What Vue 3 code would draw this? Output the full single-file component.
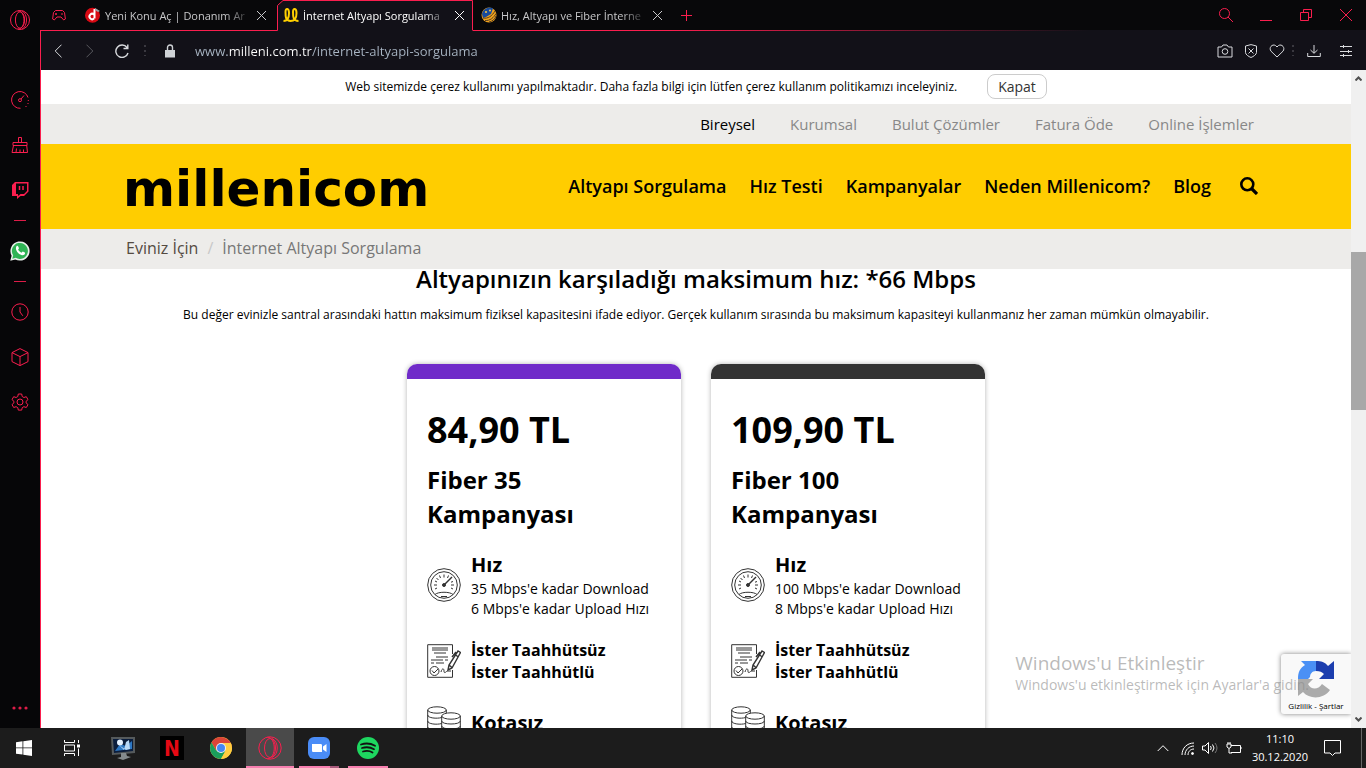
<template>
  <div class="desktop">
    <div class="browser">
      <aside class="sidebar">
        <button class="side-logo" aria-label="Opera">
          <svg width="22" height="22" viewBox="0 0 22 22" class="line">
            <circle cx="11" cy="11" r="9.5" />
            <ellipse cx="11" cy="11" rx="4.6" ry="8.2" />
            <path d="M9 1.8c8 .5 8 18 0 18.4M13 1.8c6 3 6 15.400 0 18.400" />
          </svg>
        </button>
        <button class="side-item" aria-label="Speed Dial">
          <svg width="18" height="18" viewBox="0 0 18 18" class="line">
            <path d="M17 6.500A8.400 8.400 0 1 0 9.500 17.300M10 8l3-3.500" />
            <circle cx="9" cy="9.200" r="1.500" />
            <path d="M17.300 9v1M17 12v1M15 15v1" />
          </svg>
        </button>
        <button class="side-item" aria-label="GX Cleaner">
          <svg width="18" height="18" viewBox="0 0 18 18" class="line">
            <path d="M7.500 6V1.500h3V6M2 6.500h14v3H2zM2.500 9.500L1 16.500h15.500l-.8-7M5 16.500l.5-4M9 16.500v-3M12.500 16.500v-3" />
          </svg>
        </button>
        <button class="side-item" aria-label="Twitch">
          <svg width="18" height="18" viewBox="0 0 18 18" class="line">
            <path d="M1 4l3-3h13.500v9.500L13 15H9.500L6 18v-3H1z" fill="#fa1e4e" stroke="none" />
            <path d="M5 2.500h11V10l-3 3H9.500L7 15v-2H5z" fill="#060608" stroke="none" />
            <path d="M8.500 5v4M12 5v4" stroke-width="1.500" />
          </svg>
        </button>
        <div class="side-sep"></div>
        <button class="side-item" aria-label="WhatsApp">
          <svg width="20" height="20" viewBox="0 0 20 20">
            <path d="M.3 19.700l1.300-5A9.600 9.600 0 1 1 5.300 18.400z" fill="#e8f0ea" />
            <path d="M2.300 17.700l.9-3.400a8 8 0 1 1 2.600 2.500z" fill="#2fb455" />
            <path d="M6.500 5.200c.5-.6 1.300-.6 1.600.1l.8 1.800c.1.500-.8 1.200-.8 1.500.5 1.300 1.900 2.600 3.300 3.100.5 0 1-1.200 1.500-1.100l1.900.9c.5.400.2 1.500-.3 2-3.200 3-10.700-4-8-8.300z" fill="#fff" />
          </svg>
        </button>
        <div class="side-sep"></div>
        <button class="side-item" aria-label="Geçmiş">
          <svg width="18" height="18" viewBox="0 0 18 18" class="line">
            <circle cx="9" cy="9" r="8.200" />
            <path d="M9 4v5l2.800 3.800" />
          </svg>
        </button>
        <button class="side-item" aria-label="Uzantılar">
          <svg width="18" height="18" viewBox="0 0 18 18" class="line">
            <path d="M9 .6l8 4v9l-8 4-8-4v-9zM1 4.600l8 4 8-4M9 8.600v9" />
          </svg>
        </button>
        <button class="side-item" aria-label="Ayarlar">
          <svg width="18" height="18" viewBox="0 0 18 18" class="line">
            <path d="M7.300 1h3.400l.5 2.500 1.700 1 2.400-.8L17 6.600l-1.900 1.700v1.600l1.900 1.700-1.700 2.900-2.400-.8-1.700 1-.5 2.400H7.300l-.5-2.400-1.700-1-2.400.8L1 11.600l1.900-1.700V8.300L1 6.600l1.700-2.900 2.400.8 1.700-1z" />
            <circle cx="9" cy="9" r="3" />
          </svg>
        </button>
        <button class="side-more" aria-label="Daha fazla">
          <svg width="16" height="4" viewBox="0 0 16 4" fill="#dd1c48">
            <circle cx="2" cy="2" r="1.600" /><circle cx="8" cy="2" r="1.600" /><circle cx="14" cy="2" r="1.600" />
          </svg>
        </button>
      </aside>

      <div class="window">
        <header class="tabbar">
          <button class="gx" aria-label="GX Corner">
            <svg width="14" height="12" viewBox="0 0 14 12" class="line">
              <path d="M3.500 1.500h7l2 2 .9 6.500-1.700 1L9 8H5l-2.700 3L.6 10l.9-6.500z" />
              <path d="M4 4v2M3 5h2M9 5h2" />
            </svg>
          </button>
          <div v-for="tab in tabs" :key="tab.title" class="tab" :class="{ active: tab.active }">
            <svg v-if="tab.active" class="tab-shape" viewBox="0 0 198 31" preserveAspectRatio="none">
              <path d="M0 30.500H2.500V5.500L8 .5H197.500V31H0z" fill="#121118" />
              <path d="M0 30.500H2.500V5.500L8 .5H197.500V30.500" class="line" />
            </svg>
            <svg v-if="tab.icon === 'dh'" class="favicon" viewBox="0 0 16 16">
              <circle cx="7.500" cy="8.200" r="7.500" fill="#d80a14" />
              <path d="M9 11.500a2.700 2.700 0 1 1 0-4M9.500 2v9.500" fill="none" stroke="#fff" stroke-width="2" />
              <path d="M10 1l5 3-2 1-3-2z" fill="#9aa3a8" />
            </svg>
            <svg v-else-if="tab.icon === 'milleni'" class="favicon" viewBox="0 0 16 16">
              <path d="M.5 14c4 0 5.500-3 5.500-8S2.500.5 2.500 5s0 9 5 9S13.500 11 13.500 6s-3.500-5.500-3.500-1 0 9 5.500 9" fill="none" stroke="#ffd000" stroke-width="2" />
            </svg>
            <svg v-else class="favicon" viewBox="0 0 16 16">
              <circle cx="8" cy="8" r="7.500" fill="#f0a31c" />
              <path d="M1 7A7.500 7.500 0 0 1 12 1.500L10 7 5 10 2 11z" fill="#174a9c" />
              <path d="M2 11c5 1 9-2 12-7M4 13.500c5 .5 9-3 11-7M8 15c4-1 6-3 7-6" fill="none" stroke="#553b20" />
              <circle cx="5" cy="5" r="1" fill="#ffca42" /><circle cx="9" cy="3.500" r="1" fill="#ffca42" />
            </svg>
            <span class="tab-title">{{ tab.title }}</span>
            <button class="tab-close" aria-label="Sekmeyi kapat">
              <svg width="11" height="11" viewBox="0 0 11 11"><path d="M1 1l9 9M10 1l-9 9" /></svg>
            </button>
          </div>
          <div class="tabbar-rest">
            <button class="new-tab" aria-label="Yeni sekme">
              <svg width="11" height="11" viewBox="0 0 11 11" class="line"><path d="M5.500 0v11M0 5.500h11" /></svg>
            </button>
            <div class="window-buttons">
              <button aria-label="Sekmelerde ara">
                <svg width="16" height="16" viewBox="0 0 16 16" class="line"><circle cx="6.500" cy="6.500" r="5" /><path d="M10 10l5 5" /></svg>
              </button>
              <button aria-label="Simge durumuna küçült">
                <svg width="12" height="12" viewBox="0 0 12 12" class="line"><path d="M0 11.500h12" /></svg>
              </button>
              <button aria-label="Önceki boyut">
                <svg width="12" height="12" viewBox="0 0 12 12" class="line"><path d="M.5 3.500h8v8h-8zM3.500 3.500v-3h8v8h-3" /></svg>
              </button>
              <button aria-label="Kapat">
                <svg width="12" height="12" viewBox="0 0 12 12" class="line"><path d="M0 0l12 12M12 0L0 12" /></svg>
              </button>
            </div>
          </div>
        </header>

        <div class="addressbar">
          <button class="nav-btn" aria-label="Geri">
            <svg width="8" height="14" viewBox="0 0 8 14"><path d="M7.500 .7L1.200 7l6.300 6.300" /></svg>
          </button>
          <button class="nav-btn dim" aria-label="İleri">
            <svg width="8" height="14" viewBox="0 0 8 14"><path d="M.5 .7L6.800 7 .5 13.300" /></svg>
          </button>
          <button class="nav-btn" aria-label="Yenile">
            <svg width="14" height="14" viewBox="0 0 14 14"><path d="M12 3.500A6.200 6.200 0 1 0 13 9M12.800 .5v4H8.500" stroke-width="1.400" /></svg>
          </button>
          <span class="dots"></span>
          <svg class="lock" width="10" height="14" viewBox="0 0 10 14">
            <path d="M0 6h10v7.500H0z" fill="#cfd3d6" />
            <path d="M2.500 6V3.500a2.500 2.500 0 0 1 5 0V6" fill="none" stroke="#cfd3d6" stroke-width="1.400" />
          </svg>
          <input v-model="url" class="url" type="text" aria-label="Adres" spellcheck="false" />
          <div class="tools">
            <button aria-label="Anlık görüntü">
              <svg width="16" height="14" viewBox="0 0 16 14"><path d="M1 3h3.500L6 1h4l1.500 2H15v10H1z" /><circle cx="8" cy="7.500" r="2.800" /></svg>
            </button>
            <button aria-label="Reklam engelleyici">
              <svg width="14" height="14" viewBox="0 0 14 14"><path d="M7 .6l5.500 1.400v6.500c0 2-3 4-5.500 5-2.500-1-5.500-3-5.500-5V2zM4.500 4.500l5 5M9.500 4.500l-5 5" /></svg>
            </button>
            <button aria-label="Yer imi ekle">
              <svg width="16" height="14" viewBox="0 0 16 14"><path d="M8 13L2 7.200C-.5 4 3-.5 6.500 1.500L8 3l1.500-1.500C13-.5 16.500 4 14 7.200z" /></svg>
            </button>
            <span class="dots"></span>
            <button class="download" aria-label="İndirmeler">
              <svg width="14" height="14" viewBox="0 0 14 14"><path d="M7 1v8M3.500 6L7 9.300 10.500 6M.7 9v3.500h12.600V9" /></svg>
            </button>
            <button class="easy" aria-label="Kolay kurulum">
              <svg width="12" height="12" viewBox="0 0 12 12"><path d="M0 1.500h12M0 6.500h12M0 10.500h12M3.500 0v3M8.500 5v3M3.500 9v3" /></svg>
            </button>
          </div>
        </div>

        <div class="viewport">
          <main class="page">
            <div class="cookie">
              <p>Web sitemizde çerez kullanımı yapılmaktadır. Daha fazla bilgi için lütfen çerez kullanım politikamızı inceleyiniz.</p>
              <button>Kapat</button>
            </div>

            <nav class="topnav">
              <div class="container">
                <a v-for="(item, i) in topLinks" :key="item" href="#" :class="{ current: i === 0 }">{{ item }}</a>
              </div>
            </nav>

            <nav class="mainnav">
              <div class="container">
                <a href="#" class="logo" aria-label="millenicom">
                  <svg width="306" height="56" viewBox="0 0 306 56">
                    <text x="-3" y="48">millenicom</text>
                  </svg>
                </a>
                <div class="menu">
                  <a v-for="item in menu" :key="item" href="#">{{ item }}</a>
                  <button aria-label="Ara">
                    <svg width="18" height="18" viewBox="0 0 18 18" fill="none" stroke="#000">
                      <circle cx="7.300" cy="7.300" r="6" stroke-width="2.600" />
                      <path d="M11.500 11.500l5.500 5.500" stroke-width="3.200" />
                    </svg>
                  </button>
                </div>
              </div>
            </nav>

            <nav class="breadcrumb">
              <div class="container">
                <a href="#">Eviniz İçin</a>
                <span class="slash">/</span>
                <span>İnternet Altyapı Sorgulama</span>
              </div>
            </nav>

            <section class="result">
              <h1>Altyapınızın karşıladığı maksimum hız: *66 Mbps</h1>
              <p>Bu değer evinizle santral arasındaki hattın maksimum fiziksel kapasitesini ifade ediyor. Gerçek kullanım sırasında bu maksimum kapasiteyi kullanmanız her zaman mümkün olmayabilir.</p>

              <div class="cards">
                <article v-for="plan in plans" :key="plan.name" class="card" :class="plan.theme">
                  <div class="price">{{ plan.price }}</div>
                  <h2>{{ plan.name }}<br />Kampanyası</h2>

                  <div class="feature">
                    <svg width="34" height="34" viewBox="0 0 34 34" class="outline">
                      <circle cx="17" cy="17" r="16.300" />
                      <circle cx="17" cy="17" r="13.300" />
                      <path d="M8 26.500c3-3 15-3 18 0M14 28.500h6" />
                      <path d="M7 17h3M27 17h-3M17 6.500v3M9.500 10l2 2M8 13l2 1M12.500 7.500l1 2.500M21.500 7.500l-1 2.500M26 13.500l-2 .7M8 21l2-1M26 21l-2-1" />
                      <path d="M18 16l7-7" stroke-width="1.500" />
                      <circle cx="17" cy="17" r="1.500" fill="#333" />
                    </svg>
                    <div>
                      <h3>Hız</h3>
                      <p>{{ plan.down }} Mbps'e kadar Download</p>
                      <p>{{ plan.up }} Mbps'e kadar Upload Hızı</p>
                    </div>
                  </div>

                  <div class="feature">
                    <svg width="34" height="34" viewBox="0 0 34 34" class="outline">
                      <path d="M25.500 10V.7H.7v32.600h24.800V26" />
                      <path d="M5 4h16M5 6h16M7 9h12M9 13h12M4 16h12M18 16h3M4 19h3M9 19h8M14 28c1-4 3-4 3-1 0 3 2 1 3 0h4" />
                      <circle cx="7.500" cy="27" r="4.500" />
                      <path d="M5 26.500l2 2.500 4-4" />
                      <path d="M21 26l1-5L31 7l2.500 1.500L25 24zM22 21l3 2.500M28.500 11l3 2M25 13l4-5" stroke-width="1.400" />
                    </svg>
                    <div>
                      <h4>İster Taahhütsüz</h4>
                      <h4>İster Taahhütlü</h4>
                    </div>
                  </div>

                  <div class="feature quota">
                    <svg width="34" height="34" viewBox="0 0 34 34" class="outline">
                      <ellipse cx="10" cy="4" rx="9.300" ry="3.200" />
                      <path d="M.7 4v25c0 4 13 4 14 2M19.300 4v3M.7 9c0 3 9 4 14 2.500M.7 15c0 3 9 4 14 2.500M.7 21c0 3 9 4 14 2.500" />
                      <ellipse cx="24" cy="10" rx="9.300" ry="3.200" />
                      <path d="M14.700 10v20c0 4 18.600 4 18.600 0V10M14.700 15c0 4 18.600 4 18.600 0M14.700 20c0 4 18.600 4 18.600 0M14.700 25c0 4 18.600 4 18.600 0" />
                    </svg>
                    <h3>Kotasız</h3>
                  </div>
                </article>
              </div>
            </section>

            <div class="recaptcha">
              <svg width="38" height="38" viewBox="0 0 38 38">
                <path d="M4 1h15v10c-4 0-6 3-6 6l-3 3-9-1C1 12 3 8 8 5z" fill="#4a90f5" />
                <path d="M19 1c5 0 9 1 12 5l6-5v18H22l5-5c-2-2-4-3-8-3z" fill="#1c3eae" />
                <path d="M1 19h15l-5 5c3 6 10 6 14 0l8 6c-6 9-20 10-27 2l-5 4z" fill="#ababab" />
              </svg>
              <div><a href="#">Gizlilik</a> - <a href="#">Şartlar</a></div>
            </div>
            <div class="activate">
              <strong>Windows'u Etkinleştir</strong>
              <span>Windows'u etkinleştirmek için Ayarlar'a gidin.</span>
            </div>
          </main>

          <div class="scrollbar">
            <button aria-label="Yukarı kaydır">
              <svg width="7" height="5" viewBox="0 0 7 5"><path d="M.5 4.500l3-3 3 3" /></svg>
            </button>
            <div class="track">
              <div class="thumb" :style="{ top: scroll.top + '%', height: scroll.size + '%' }"></div>
            </div>
            <button aria-label="Aşağı kaydır">
              <svg width="7" height="5" viewBox="0 0 7 5"><path d="M.5 .5l3 3 3-3" /></svg>
            </button>
          </div>
        </div>
      </div>
    </div>

    <footer class="taskbar">
      <button class="system" aria-label="Başlat">
        <svg width="16" height="16" viewBox="0 0 16 16" fill="#fff"><path d="M0 2.200l6.500-.9v6.200H0zM7.300 1.200L16 0v7.500H7.300zM0 8.300h6.500v6.200L0 13.700zM7.300 8.300H16V16l-8.700-1.200z" /></svg>
      </button>
      <button class="system" aria-label="Görev görünümü">
        <svg width="16" height="16" viewBox="0 0 16 16" fill="none" stroke="#fff">
          <path d="M.5 0v2.500h10V0M.5 16v-2.500h10V16M.5 5h10v6H.5zM14.500 0v3M14.500 8.500V16" />
          <path d="M13 4.500h3v3h-3z" fill="#fff" stroke="none" />
        </svg>
      </button>
      <button class="app" aria-label="Bilgisayar">
        <svg width="24" height="24" viewBox="0 0 24 24">
          <path d="M0 1h24v16L1 19z" fill="#555a5c" />
          <path d="M2 3h20v12L3 17z" fill="#0b1e3d" />
          <path d="M4 15l5-7 6 2 6-5v8z" fill="#2d78c4" />
          <circle cx="9" cy="6.500" r="3" fill="#e6f2ff" /><path d="M8 9l5 5 2-8 3-2 1 9-4 1z" fill="#b8d9f7" />
          <path d="M10 17h5l1 3 4 1-8 3-6-2 4-1z" fill="#838a8d" />
        </svg>
      </button>
      <button class="app" aria-label="Netflix">
        <svg width="24" height="24" viewBox="0 0 24 24">
          <rect width="24" height="24" fill="#000" />
          <text x="12" y="20" class="netflix" text-anchor="middle">N</text>
        </svg>
      </button>
      <button class="app" aria-label="Google Chrome">
        <svg width="22" height="22" viewBox="0 0 22 22">
          <circle cx="11" cy="11" r="11" fill="#ffcd40" />
          <path d="M11 11H22A11 11 0 0 0 1.500 5.500L6.300 13.700z" fill="#dc4437" />
          <path d="M1.500 5.500A11 11 0 0 0 11 22l4.500-8L11 11 6.300 13.700z" fill="#1a9f5b" />
          <path d="M11 6h9.800A11 11 0 0 1 11 22l4.700-8.500z" fill="#ffcd40" />
          <circle cx="11" cy="11" r="5" fill="#f1f1f1" /><circle cx="11" cy="11" r="4" fill="#4587f3" />
        </svg>
      </button>
      <button class="app focused" aria-label="Opera GX">
        <svg width="24" height="24" viewBox="0 0 24 24" class="line">
          <circle cx="12" cy="12" r="11.200" />
          <ellipse cx="12" cy="12" rx="5.500" ry="9.500" />
          <path d="M9.500 1c9 1 9 21 0 22M14 2.500c7 3 7 16 0 19" />
        </svg>
      </button>
      <button class="app grouped" aria-label="Zoom">
        <svg width="22" height="22" viewBox="0 0 22 22">
          <rect width="22" height="22" rx="6" fill="#4a8cf7" />
          <path d="M4 7h8.500c1 0 1.500.5 1.500 1.500V15H5.500C4.500 15 4 14.500 4 13.500zM15 9.500l3.500-2.500v8L15 12.500z" fill="#fff" />
        </svg>
      </button>
      <button class="app open" aria-label="Spotify">
        <svg width="22" height="22" viewBox="0 0 22 22">
          <circle cx="11" cy="11" r="11" fill="#1ed760" />
          <path d="M4 7.500c4.500-1.500 10-1 14 1.200M5 11c4-1.200 8.500-.8 12 1.200M6 14.500c3.500-1 7-.6 9.500 1" fill="none" stroke="#121212" stroke-width="1.800" stroke-linecap="round" />
        </svg>
      </button>

      <div class="tray">
        <button class="caret" aria-label="Gizli simgeleri göster">
          <svg width="12" height="8" viewBox="0 0 12 8"><path d="M.7 7L6 1.700 11.300 7" /></svg>
        </button>
        <svg width="13" height="13" viewBox="0 0 13 13">
          <path d="M1 13C1 6 6 1 13 1M4 13c0-5 4-9 9-9M7 13c0-3.500 2.500-6 6-6" />
          <circle cx="11.500" cy="11.500" r="1" fill="#fff" />
        </svg>
        <svg width="16" height="14" viewBox="0 0 16 14">
          <path d="M.5 5h2.500L6.500 1.500v11L3 9H.5zM8.500 5q1.500 2 0 4M10.500 3.500q3 3.500 0 7" />
          <path d="M13 2q4 5 0 10" stroke="#777" />
        </svg>
        <svg width="16" height="12" viewBox="0 0 16 12">
          <path d="M5 3.500h9.500v7H5M14.500 6H16M1 2h4v3L3 6.500 1 5zM2 0v2M4 0v2M3 6.500V11h3" />
        </svg>
        <div class="clock"><span>11:10</span><span>30.12.2020</span></div>
        <button class="notify" aria-label="Bildirimler">
          <svg width="17" height="16" viewBox="0 0 17 16"><path d="M.5 .5h16v12.500H11L8.500 15.500 6 13H.5z" /></svg>
        </button>
        <div class="show-desktop"></div>
      </div>
    </footer>
  </div>
</template>

<script setup>
import { ref } from 'vue'

const url = ref('www.milleni.com.tr/internet-altyapi-sorgulama')

const tabs = [
  { title: 'Yeni Konu Aç | Donanım Ar', icon: 'dh', active: false },
  { title: 'İnternet Altyapı Sorgulama', icon: 'milleni', active: true },
  { title: 'Hız, Altyapı ve Fiber İnterne', icon: 'globe', active: false }
]

const topLinks = ['Bireysel', 'Kurumsal', 'Bulut Çözümler', 'Fatura Öde', 'Online İşlemler']
const menu = ['Altyapı Sorgulama', 'Hız Testi', 'Kampanyalar', 'Neden Millenicom?', 'Blog']

const plans = [
  { name: 'Fiber 35', price: '84,90 TL', down: 35, up: 6, theme: 'purple' },
  { name: 'Fiber 100', price: '109,90 TL', down: 100, up: 8, theme: 'dark' }
]

const scroll = { top: 26.4, size: 25.3 }
</script>

<style>
body {
  margin: 0;
  overflow: hidden;
}
</style>

<style scoped>
* {
  box-sizing: border-box;
}

.desktop {
  display: flex;
  flex-direction: column;
  height: 100vh;
  font-family: 'Open Sans', 'Noto Sans', sans-serif;
  color: #000;
}

button {
  display: flex;
  align-items: center;
  justify-content: center;
  padding: 0;
  border: 0;
  background: none;
  color: inherit;
  font-family: inherit;
}

a {
  color: inherit;
  text-decoration: none;
}

h1, h2, h3, h4, p {
  margin: 0;
}

svg {
  flex-shrink: 0;
}

.line {
  fill: none;
  stroke: #fa1e4e;
}

.browser {
  display: flex;
  flex: 1;
  min-height: 0;
  background: #060608;
}

/* sidebar */
.sidebar {
  display: flex;
  flex-direction: column;
  width: 40px;
}

.side-logo {
  height: 40px;
  margin-bottom: 37px;
}

.side-item {
  height: 45px;
}

.side-sep {
  align-self: center;
  width: 12px;
  height: 1px;
  margin: 8px 0 7px;
  background: #dd1c48;
}

.side-more {
  height: 40px;
  margin-top: auto;
}

.window {
  display: flex;
  flex: 1;
  flex-direction: column;
  min-width: 0;
}

/* tabs */
.tabbar {
  display: flex;
  height: 31px;
  background: #08080a;
}

.gx {
  width: 37px;
  border-bottom: 1px solid #fa1e4e;
}

.tab {
  position: relative;
  display: flex;
  align-items: center;
  width: 198px;
  padding: 0 7px 0 8px;
  border-bottom: 1px solid #fa1e4e;
  color: #c8c8ca;
}

.tab.active {
  border-bottom: 0;
  padding-bottom: 1px;
  color: #fff;
}

.tab-shape {
  position: absolute;
  inset: 0;
  width: 100%;
  height: 100%;
}

.favicon {
  position: relative;
  width: 16px;
  height: 16px;
}

.tab-title {
  position: relative;
  flex: 1;
  margin-left: 4px;
  overflow: hidden;
  font-size: 11px;
  white-space: nowrap;
  mask-image: linear-gradient(to right, #000 80%, transparent 98%);
}

.tab-close {
  position: relative;
  width: 13px;
  height: 20px;
}

.tab-close svg {
  fill: none;
  stroke: currentColor;
}

.tabbar-rest {
  display: flex;
  flex: 1;
  justify-content: space-between;
  border-bottom: 1px solid;
  border-image: linear-gradient(to right, #fa1e4e, #121118 60%) 1;
}

.new-tab {
  width: 30px;
}

.window-buttons {
  display: flex;
}

.window-buttons button {
  width: 40px;
}

/* address bar */
.addressbar {
  display: flex;
  align-items: center;
  height: 39px;
  padding-left: 1px;
  border-left: 1px solid #fa1e4e;
  background: #121118;
}

.addressbar svg:not(.lock) {
  fill: none;
  stroke: #d8dadd;
}

.nav-btn {
  width: 32px;
  height: 32px;
}

.nav-btn.dim svg {
  opacity: 0.35;
}

.dots {
  width: 2px;
  height: 11px;
  margin: 0 6px;
  background: repeating-linear-gradient(#3a3940 0 2px, transparent 2px 5px);
}

.lock {
  margin-left: 13px;
}

.url {
  flex: 1;
  min-width: 0;
  margin-left: 20px;
  padding: 0;
  border: 0;
  outline: 0;
  background: linear-gradient(to right, #a9b6c4 33px, #fff 33px 117px, #a9b6c4 117px);
  background-clip: text;
  color: transparent;
  font-family: inherit;
  font-size: 13px;
}

.tools {
  display: flex;
  align-items: center;
  padding-right: 8px;
}

.tools button {
  width: 26px;
  height: 26px;
}

.tools .dots {
  margin-left: 2px;
}

.tools .download {
  width: 28px;
}

.tools .easy {
  width: 24px;
  margin-left: 6px;
}

/* page */
.viewport {
  display: flex;
  flex: 1;
  min-height: 0;
  border-left: 1px solid #fa1e4e;
}

.page {
  position: relative;
  flex: 1;
  min-width: 0;
  overflow: hidden;
  background: #fff;
}

.container {
  display: flex;
  align-items: center;
  max-width: 1140px;
  height: 100%;
  margin: 0 auto;
}

.cookie {
  display: flex;
  align-items: center;
  justify-content: center;
  gap: 30px;
  height: 34px;
  padding-bottom: 1px;
  font-size: 12px;
}

.cookie button {
  padding: 0 10px;
  border: 1px solid #ccc;
  border-radius: 8px;
  background: #fff;
  color: #333;
  font-size: 14px;
  line-height: 23px;
}

.topnav {
  height: 40px;
  background: #edecea;
}

.topnav .container {
  justify-content: flex-end;
  gap: 35px;
  padding-right: 12px;
  color: #888;
  font-size: 15px;
}

.topnav .current {
  color: #000;
}

.mainnav {
  height: 85px;
  background: #ffcd00;
}

.mainnav .container {
  justify-content: space-between;
  padding: 0 8px 2px 0;
}

.logo svg {
  display: block;
}

.logo text {
  font-family: 'DejaVu Sans', sans-serif;
  font-size: 50px;
  font-weight: bold;
}

.menu {
  display: flex;
  align-items: center;
  gap: 23px;
  font-size: 18px;
  font-weight: 600;
}

.menu button {
  margin-left: 6px;
}

.breadcrumb {
  height: 40px;
  padding-bottom: 2px;
  background: #edecea;
  color: #777;
  font-size: 16px;
}

.breadcrumb a {
  color: #544a41;
}

.slash {
  margin: 0 9px;
  color: #c8c8c8;
}

.result {
  text-align: center;
}

.result h1 {
  font-size: 24px;
  font-weight: 600;
  line-height: 20px;
}

.result > p {
  margin-top: 16px;
  font-size: 12px;
  line-height: 20px;
}

.cards {
  display: flex;
  justify-content: center;
  gap: 30px;
  margin-top: 39px;
  text-align: left;
}

.card {
  width: 274px;
  padding: 24px 20px 40px;
  border-top: 15px solid;
  border-radius: 10px;
  box-shadow: 0 0 5px rgba(0, 0, 0, 0.3);
}

.card.purple {
  border-top-color: #702bc9;
}

.card.dark {
  border-top-color: #333;
}

.price {
  font-size: 36px;
  font-weight: 700;
  line-height: 54px;
}

.card h2 {
  margin-top: 6px;
  font-size: 24px;
  line-height: 34px;
}

.card h3 {
  font-size: 20px;
  line-height: 28px;
}

.card h4 {
  font-size: 16px;
  line-height: 22px;
}

.feature {
  display: flex;
  align-items: center;
  gap: 10px;
  margin-top: 20px;
}

.quota {
  margin-top: 23px;
}

.feature p {
  font-size: 14px;
  line-height: 20px;
  white-space: nowrap;
}

.outline {
  fill: none;
  stroke: #333;
}

.recaptcha {
  position: absolute;
  right: 0;
  bottom: 14px;
  display: flex;
  flex-direction: column;
  align-items: center;
  justify-content: space-between;
  width: 70px;
  height: 60px;
  padding: 6px 0 2px;
  border-radius: 3px 0 0 3px;
  background: #f9f9f9;
  box-shadow: 0 0 5px #808080;
  font-size: 8px;
  line-height: 12px;
}

.activate {
  position: absolute;
  right: 42px;
  bottom: 33px;
  display: flex;
  flex-direction: column;
  color: rgba(140, 140, 140, 0.6);
  pointer-events: none;
}

.activate strong {
  font-size: 19px;
  font-weight: 400;
  line-height: 24px;
}

.activate span {
  font-size: 14px;
  line-height: 20px;
}

.scrollbar {
  display: flex;
  flex-direction: column;
  width: 15px;
  background: #f0f0f0;
}

.scrollbar button {
  height: 17px;
}

.scrollbar svg {
  fill: none;
  stroke: #505050;
  stroke-width: 2;
}

.track {
  position: relative;
  flex: 1;
}

.thumb {
  position: absolute;
  width: 100%;
  background: #a8a8a8;
}

/* taskbar */
.taskbar {
  display: flex;
  height: 40px;
  background: #1c1c1c;
  color: #fff;
}

.system {
  width: 48px;
}

.app {
  width: 49px;
  border-right: 1px solid #1c1c1c;
}

.system + .app {
  margin-left: 3px;
}

.netflix {
  fill: #e50914;
  font-family: 'Liberation Sans Narrow', 'DejaVu Sans Condensed', sans-serif;
  font-size: 21px;
  font-weight: bold;
}

.focused {
  background: linear-gradient(#f77fb0, #f77fb0) bottom / 100% 2px no-repeat #4a4a4a;
}

.grouped {
  background: linear-gradient(to right, #f77fb0 78%, #a85a7c 78%) bottom / 40px 2px no-repeat;
}

.open {
  background: linear-gradient(#f77fb0, #f77fb0) bottom / 40px 2px no-repeat;
}

.tray {
  display: flex;
  align-items: center;
  gap: 8px;
  margin-left: auto;
}

.tray svg {
  fill: none;
  stroke: #fff;
}

.caret {
  margin-right: 4px;
}

.clock {
  display: flex;
  flex-direction: column;
  align-items: center;
  margin-left: 2px;
  font-size: 11px;
  line-height: 18px;
}

.notify {
  margin-left: 8px;
}

.show-desktop {
  width: 5px;
  height: 100%;
  margin-left: 12px;
  border-left: 1px solid #666;
}
</style>
